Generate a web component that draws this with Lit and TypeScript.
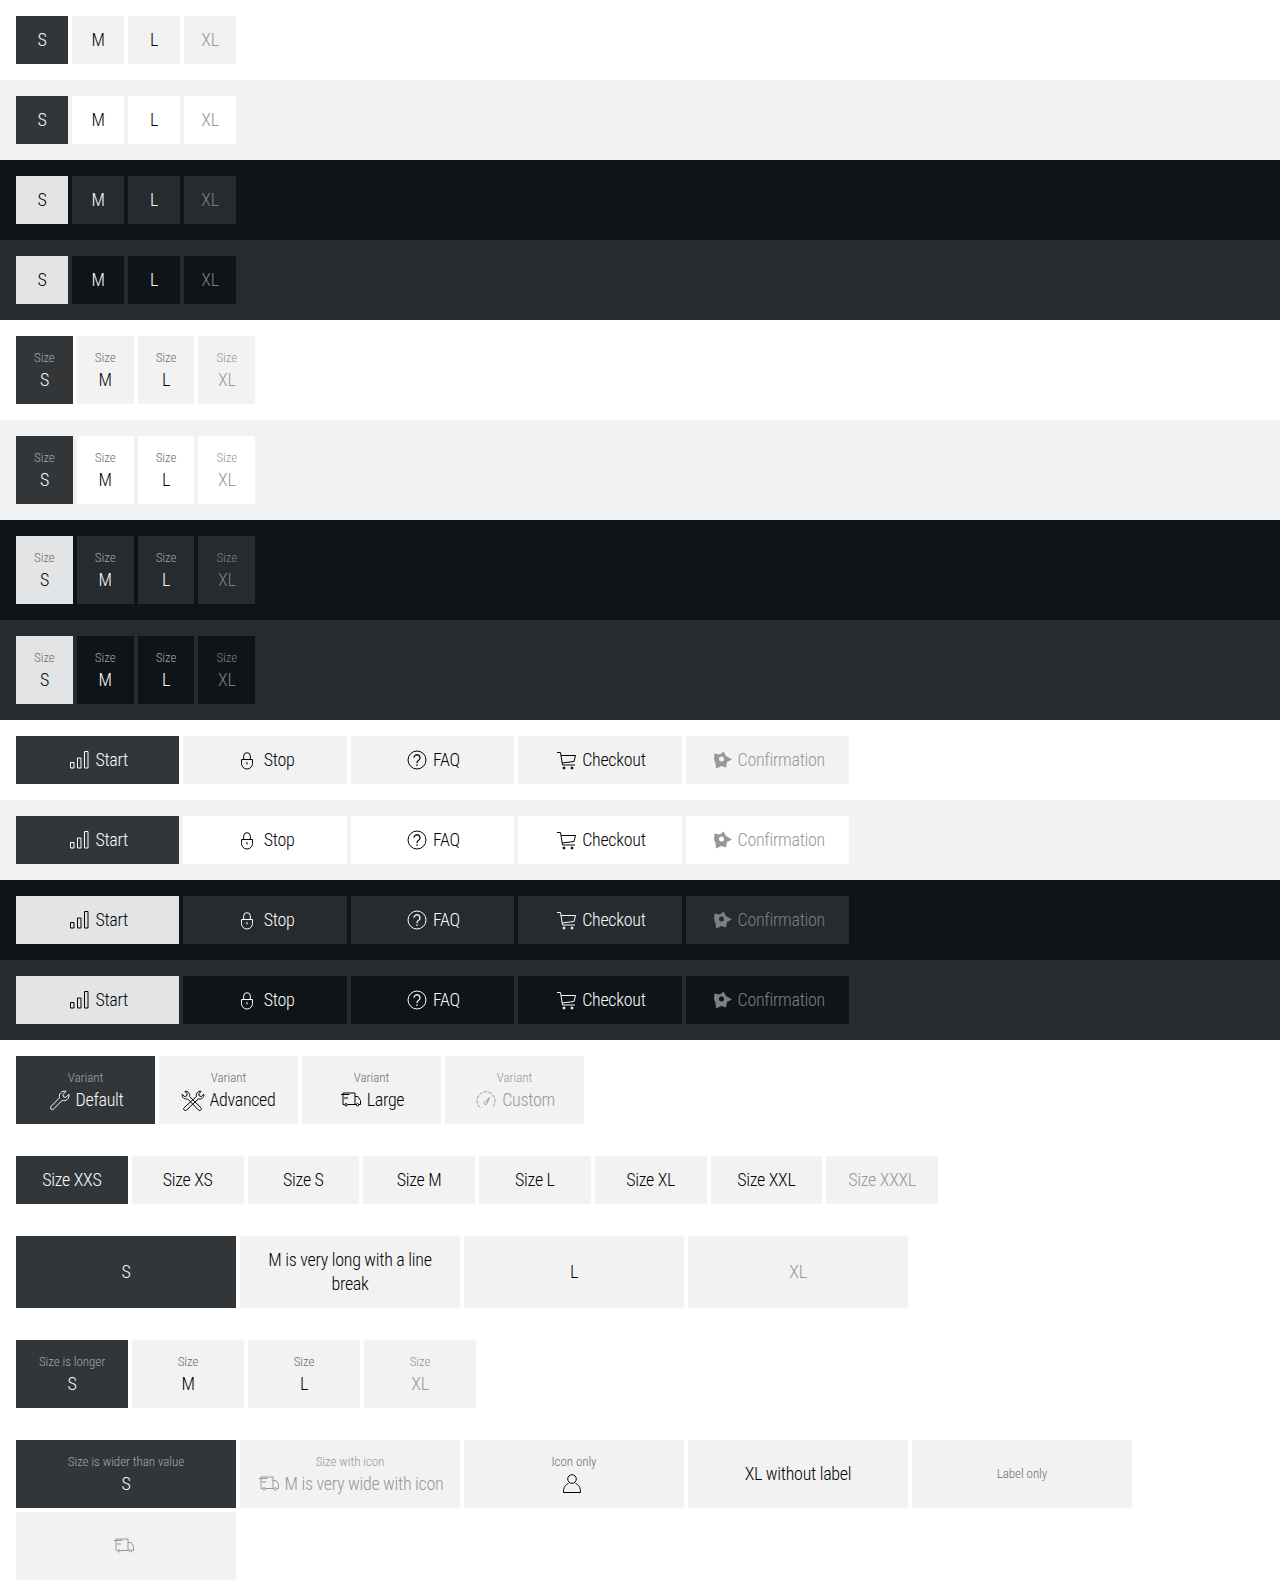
import { LitElement, html, css, svg } from "lit";
import { customElement } from "lit/decorators.js";

type Item = { label?: string; value?: string; icon?: string; selected?: boolean; disabled?: boolean };

const icons: Record<string, unknown> = {
  bars: svg`<path d="M3.5 14.500H7V20H3.500zM10.500 10H14V20H10.500zM17.500 3.500H21V20H17.500z"/>`,
  lock: svg`<path d="M5.500 11.500h11v4a5.500 5.500 0 0 1-11 0zM7.700 11.500V8a3.300 3.300 0 0 1 6.600 0v3.500M11 14v2.500"/>`,
  faq: svg`<circle cx="12" cy="12" r="9"/><path d="M9 9.800a3 3 0 1 1 4.600 2.500c-1.100 .7-1.600 1.300-1.600 2.700" stroke-width="1.300"/><path d="M12 16.200v1.600" stroke-width="1.300"/>`,
  cart: svg`<path d="M3 4.500h3.500l2 12.500H21M7 7.500h14.500l-1.500 6-12 1.500"/><circle cx="10" cy="20" r="1" fill="currentColor"/><circle cx="18" cy="20" r="1" fill="currentColor"/>`,
  star: svg`<path fill="currentColor" stroke="none" fill-rule="evenodd" d="M4.500 5.500l5.500 1L13.500 3.500l2.500 4.500 6 3.500-5 2.500-1 5.500-4.500-1.500-5.500 2.500-.5-5.500L4 11.500zM11.500 8.500a2.500 2.500 0 1 0 0 5 2.500 2.500 0 0 0 0-5z"/>`,
  wrench: svg`<path d="M3 18.500L11.500 9.800C10.500 6 13.500 2.500 18 3.200L15 6.500l.5 2.300 2.300.6L21 6.200c.6 4.300-3 7.500-6.800 6.200L5.500 21a1.600 1.600 0 0 1-2.500-2.500z"/>`,
  tools: svg`<path d="M3.800 3.400l2.400 2.300-.5 2.300-2.300 .5-2.200-2.300c-.4 3.300 2.500 5.500 5.300 4.600l11.300 11.500c1 1 3.500-1 2.300-2.400L8.500 8.500c1-3-1.500-5.700-4.700-5.100zM20.200 3.400l-2.400 2.300.5 2.300 2.300 .5 2.200-2.300c.4 3.300-2.500 5.500-5.300 4.600L5.200 22.300c-1 1-3.500-1-2.300-2.400l12.600-11.400c-1-3 1.500-5.700 4.700-5.100z"/>`,
  truck: svg`<path d="M2 6.500h8.500M5 10h4M4 6.500V16.500h1.500M8.500 16.500h7.500V5H4V6.500M16 8.500h3l2.500 4v4H20M17 16.500h-1"/><circle cx="7" cy="16.800" r="1.200"/><circle cx="18.500" cy="16.800" r="1.200"/>`,
  gauge: svg`<path d="M6 19.500A9 9 0 1 1 18 19.500" stroke-dasharray="3.500 1.300"/><path d="M10.800 14.200l4.700-4.700-2.700 6.200a1.300 1.300 0 1 1-2-1.500z"/>`,
  user: svg`<circle cx="12" cy="7" r="4.300"/><path d="M8.500 11.500C5.500 12.500 3.500 15 3.500 20.500h17C20.500 15 18.500 12.500 15.500 11.500"/>`,
};

const sizes: Item[] = [{ value: "S", selected: true }, { value: "M" }, { value: "L" }, { value: "XL", disabled: true }];
const labelled: Item[] = sizes.map((i) => ({ ...i, label: "Size" }));
const withIcons: Item[] = [
  { value: "Start", icon: "bars", selected: true },
  { value: "Stop", icon: "lock" },
  { value: "FAQ", icon: "faq" },
  { value: "Checkout", icon: "cart" },
  { value: "Confirmation", icon: "star", disabled: true },
];
const themes = ["light", "surface", "dark", "dark-surface"];

const variants: Item[] = [
  { label: "Variant", value: "Default", icon: "wrench", selected: true },
  { label: "Variant", value: "Advanced", icon: "tools" },
  { label: "Variant", value: "Large", icon: "truck" },
  { label: "Variant", value: "Custom", icon: "gauge", disabled: true },
];
const longSizes: Item[] = ["XXS", "XS", "S", "M", "L", "XL", "XXL", "XXXL"].map((s, i) => ({
  value: `Size ${s}`,
  selected: i === 0,
  disabled: i === 7,
}));
const lineBreak: Item[] = [
  { value: "S", selected: true },
  { value: "M is very long with a line break" },
  { value: "L" },
  { value: "XL", disabled: true },
];
const longLabel: Item[] = [
  { label: "Size is longer", value: "S", selected: true },
  { label: "Size", value: "M" },
  { label: "Size", value: "L" },
  { label: "Size", value: "XL", disabled: true },
];
const mixed: Item[] = [
  { label: "Size is wider than value", value: "S", selected: true },
  { label: "Size with icon", value: "M is very wide with icon", icon: "truck", disabled: true },
  { label: "Icon only", icon: "user" },
  { value: "XL without label" },
  { label: "Label only" },
  { icon: "truck", disabled: true },
];

@customElement("app-root")
export class AppRoot extends LitElement {
  static styles = css`
    :host {
      display: block;
      font-family: "Roboto", "Liberation Sans", sans-serif;
      font-stretch: 75%;
      font-weight: 340;
    }
    .row {
      padding: 16px;
      background: var(--bg);
      color: var(--text);
    }
    .light { --bg: #fff; --item: #f2f2f2; --text: #010205; --label: #6b6d70; --off: #96989a; --sel: #323639; --sel-text: #fbfcff; --sel-label: #a5a6a8; }
    .surface { --bg: #f2f2f2; --item: #fff; --text: #010205; --label: #6b6d70; --off: #96989a; --sel: #323639; --sel-text: #fbfcff; --sel-label: #a5a6a8; }
    .dark { --bg: #0e1418; --item: #262b2e; --text: #fbfcff; --label: #a5a6a8; --off: #7e7f82; --sel: #e3e4e5; --sel-text: #010205; --sel-label: #6b6d70; }
    .dark-surface { --bg: #262b2e; --item: #0e1418; --text: #fbfcff; --label: #a5a6a8; --off: #7e7f82; --sel: #e3e4e5; --sel-text: #010205; --sel-label: #6b6d70; }
    .grid {
      display: grid;
      gap: 4px;
      grid-template-columns: repeat(auto-fill, var(--w));
    }
    .w52 { --w: 52px; }
    .w57 { --w: 56.8px; }
    .w164 { --w: 163.4px; }
    .w139 { --w: 139px; }
    .w112 { --w: 111.75px; }
    .w112b { --w: 112px; }
    .w220 { --w: 220px; }
    .item {
      display: flex;
      flex-direction: column;
      align-items: center;
      justify-content: center;
      min-height: 48px;
      padding: 12px 24px;
      box-sizing: border-box;
      background: var(--item);
      text-align: center;
      font-size: 18px;
      line-height: 24px;
      letter-spacing: -0.3px;
    }
    .tall .item { min-height: 68px; padding-top: 4px; padding-bottom: 4px; }
    .pad8 .item { padding-left: 8px; padding-right: 8px; }
    .item.selected { background: var(--sel); color: var(--sel-text); }
    .item.disabled { color: var(--off); }
    .label {
      font-size: 13px;
      line-height: 20px;
      letter-spacing: -0.05px;
      color: var(--label);
    }
    .item.selected .label { color: var(--sel-label); }
    .item.disabled .label { color: var(--off); }
    .value {
      display: flex;
      align-items: center;
      justify-content: center;
    }
    svg {
      width: 24px;
      height: 24px;
      margin-right: 4px;
      flex: none;
      fill: none;
      stroke: currentColor;
      stroke-width: 1;
    }
  `;

  private item(i: Item) {
    const cls = `item ${i.selected ? "selected" : ""} ${i.disabled ? "disabled" : ""}`;
    const hasValue = i.value || i.icon;
    return html`<div class=${cls}>
      ${i.label ? html`<span class="label">${i.label}</span>` : null}
      ${hasValue
        ? html`<span class="value">
            ${i.icon ? html`<svg viewBox="0 0 24 24">${icons[i.icon]}</svg>` : null}
            ${i.value ? html`<span>${i.value}</span>` : null}
          </span>`
        : null}
    </div>`;
  }

  private row(items: Item[], width: string, theme = "light", extra = "") {
    return html`<div class="row ${theme}">
      <div class="grid ${width} ${extra}">${items.map((i) => this.item(i))}</div>
    </div>`;
  }

  render() {
    return html`
      ${themes.map((t) => this.row(sizes, "w52", t, "pad8"))}
      ${themes.map((t) => this.row(labelled, "w57", t, "tall pad8"))}
      ${themes.map((t) => this.row(withIcons, "w164", t, "pad8"))}
      ${this.row(variants, "w139", "light", "tall pad8")}
      ${this.row(longSizes, "w112", "light", "pad8")}
      ${this.row(lineBreak, "w220")}
      ${this.row(longLabel, "w112b", "light", "tall pad8")}
      ${this.row(mixed, "w220", "light", "tall pad8")}
    `;
  }
}
